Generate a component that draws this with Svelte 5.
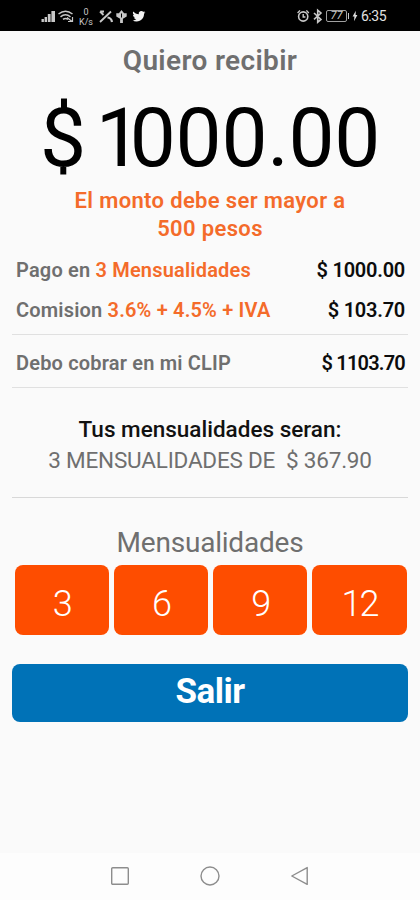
<script lang="ts">
  let amount = $state(1000)
  let months = $state(3)

  const plans = [3, 6, 9, 12]
  const rates: Record<number, number> = { 3: 4.5, 6: 7.5, 9: 9.9, 12: 11.95 }
  const baseRate = 3.6
  const iva = 1.16

  let share = $derived(((baseRate + rates[months]) / 100) * iva)
  let total = $derived(Math.round((amount / (1 - share)) * 10) / 10)
  let fee = $derived(total - amount)
  let monthly = $derived(total / months)

  const money = (n: number) => n.toFixed(2)
</script>

<div class="screen">
  <header class="status">
    <svg class="signal" viewBox="0 0 106 20" width="106" height="20">
      <g fill="#c8c8c8">
        <rect x="-.5" y="12" width="2.4" height="3" />
        <rect x="2.6" y="10" width="2.4" height="5" />
        <rect x="5.8" y="7" width="2.8" height="8" />
        <rect x="9.4" y="4" width="3.6" height="11" />
      </g>
      <g fill="none" stroke="#c8c8c8" stroke-width="1.5">
        <path d="M16.5 7 Q23.5 1.5 30.5 7M18.5 9.8 Q23.5 5.8 28.5 9.8M21 12.4 Q23.5 10.4 26 12.4" />
        <path d="M25 10.5 l5 4 M30.5 10 v4.5 h-4.5" stroke-width="1.2" />
      </g>
      <g fill="none" stroke="#c8c8c8" stroke-width="1.8">
        <path d="M58 4.5 l3.5 3.5 M62 4.5 h-3.8 M69 4.5 L58 15" />
        <path d="M65.5 10.5 q4 .5 4.5 4.5" stroke-width="2.2" />
      </g>
      <path d="M79.5 3 l2.6 3.2 h2.6 v3.4 l-3.8 2.2 v4.2 h-2.8 v-4.2 l-3.8 -2.2 v-3.4 h2.6z" fill="#c8c8c8" />
      <path d="M79 6.5 h1 v4 h-1z" fill="#000" />
      <path
        transform="translate(90.4 2.8) scale(.54)"
        fill="#f2f2f2"
        d="M23.95 4.57a10 10 0 01-2.82.77 4.96 4.96 0 002.16-2.72c-.95.55-2 .95-3.13 1.18a4.92 4.92 0 00-8.38 4.48C7.69 8.1 4.07 6.13 1.64 3.16a4.82 4.82 0 00-.67 2.48c0 1.71.87 3.21 2.19 4.1a4.9 4.9 0 01-2.23-.62v.06a4.92 4.92 0 003.95 4.83 5 5 0 01-2.21.08 4.94 4.94 0 004.6 3.42A9.87 9.87 0 010 19.54a13.99 13.99 0 007.56 2.21c9.05 0 14-7.5 14-13.98 0-.21 0-.42-.02-.63A9.94 9.94 0 0024 4.59z"
      />
    </svg>
    <span class="speed"><span>0</span><span>K/s</span></span>
    <div class="right">
      <svg viewBox="0 0 28 16" width="28" height="16" fill="none" stroke="#c8c8c8">
        <circle cx="6.2" cy="8.5" r="4.6" stroke-width="1.6" />
        <path d="M6.2 6 v3 h2.2 M.6 5 L3 2.4 M9.4 2.4 L11.8 5" stroke-width="1.4" />
        <path d="M17 5 l7 6.4 -3.3 2.8 V2.2 l3.3 2.8 L17 11.4" stroke-width="1.6" />
      </svg>
      <span class="battery">77</span>
      <svg viewBox="0 0 6 12" width="6" height="12">
        <path d="M3.8 .8 L.6 6.6 H2.4 L2 11.2 L5.4 5 H3.6z" fill="#ddd" />
      </svg>
      <span class="clock">6:35</span>
    </div>
  </header>

  <main>
    <h1>Quiero recibir</h1>
    <div class="amount">$ <span class="first">{money(amount)[0]}</span>{money(amount).slice(1)}</div>
    <p class="warning">El monto debe ser mayor a<br />500 pesos</p>

    <div class="row">
      <span class="label">Pago en <b>{months} Mensualidades</b></span>
      <span class="value">$ {money(amount)}</span>
    </div>
    <div class="row">
      <span class="label">Comision <b>{baseRate}% + {rates[months]}% + IVA</b></span>
      <span class="value">$ {money(fee)}</span>
    </div>
    <div class="row total">
      <span class="label">Debo cobrar en mi CLIP</span>
      <span class="value">$ {money(total)}</span>
    </div>

    <section class="summary">
      <p class="lead">Tus mensualidades seran:</p>
      <p class="detail">{months} MENSUALIDADES DE &nbsp;$ {money(monthly)}</p>
    </section>

    <h2>Mensualidades</h2>
    <div class="plans">
      {#each plans as plan}
        <button class="plan" onclick={() => (months = plan)}>{plan}</button>
      {/each}
    </div>
    <button class="exit">Salir</button>
  </main>

  <nav>
    <svg viewBox="0 0 20 20" width="20" height="20"><rect x="1.7" y="1.7" width="16.6" height="16.6" rx="1" /></svg>
    <svg viewBox="0 0 20 20" width="20" height="20"><circle cx="10" cy="10" r="9" /></svg>
    <svg viewBox="0 0 20 20" width="20" height="20"><path d="M17.2 1.6 V18.4 L1.8 10z" /></svg>
  </nav>
</div>

<style>
  :global(body) {
    margin: 0;
    background: #fafafa;
  }

  .screen {
    width: 420px;
    height: 900px;
    display: flex;
    flex-direction: column;
    overflow: hidden;
    background: #fafafa;
    color: #6f6f6f;
    font-family: Roboto, "Liberation Sans", sans-serif;
    white-space: nowrap;
  }

  .status {
    position: relative;
    box-sizing: border-box;
    height: 31px;
    flex: none;
    display: flex;
    justify-content: space-between;
    padding: 7px 34px 0 42px;
    background: #000;
    color: #c8c8c8;
  }

  .signal {
    display: block;
    overflow: visible;
  }

  /* sits in the gap between the wifi and muted-call icons */
  .speed {
    position: absolute;
    left: 78px;
    top: 7px;
    width: 16px;
    display: flex;
    flex-direction: column;
    font-size: 9px;
    line-height: 10px;
    text-align: center;
  }

  .right {
    display: flex;
    align-items: center;
    height: 18px;
  }

  .battery {
    position: relative;
    box-sizing: border-box;
    width: 21px;
    height: 12px;
    margin: 0 5px 0 1px;
    border: 1px solid #a0a0a0;
    border-radius: 2px;
    font-size: 11px;
    font-style: italic;
    line-height: 10px;
    text-align: center;
  }

  .battery::after {
    content: "";
    position: absolute;
    right: -3px;
    top: 2px;
    width: 1.5px;
    height: 6px;
    background: #c8c8c8;
  }

  .clock {
    margin-left: 3px;
    color: #e2e2e2;
    font-size: 14px;
    letter-spacing: -0.5px;
  }

  main {
    flex: 1;
    display: flex;
    flex-direction: column;
    padding: 14px 12px 0;
  }

  h1,
  h2,
  p {
    margin: 0;
    text-align: center;
  }

  h1 {
    font-size: 28px;
    font-weight: 600;
    line-height: 32px;
    letter-spacing: 0.35px;
  }

  .amount {
    margin-top: 21px;
    color: #000;
    font-size: 82px;
    line-height: 80px;
    letter-spacing: -0.3px;
    word-spacing: -10px;
    text-align: center;
  }

  .first {
    letter-spacing: -12px;
  }

  .warning {
    margin-top: 9px;
    color: #f46b2a;
    font-size: 22px;
    font-weight: 600;
    line-height: 28px;
    letter-spacing: 0.35px;
  }

  .row {
    display: flex;
    justify-content: space-between;
    padding: 0 3px 0 4px;
    font-size: 20px;
    font-weight: 600;
    line-height: 40px;
  }

  .warning + .row {
    margin-top: 7px;
  }

  .row b {
    color: #f46b2a;
    font-weight: 600;
  }

  .label {
    letter-spacing: 0.18px;
  }

  .value {
    color: #0c0c0c;
    letter-spacing: -0.25px;
  }

  .total {
    margin-top: 4px;
    padding-top: 8px;
    padding-bottom: 4px;
    border: solid #e0e0e0;
    border-width: 1px 0;
  }

  .total .value {
    letter-spacing: -0.8px;
  }

  .summary {
    padding: 26px 0 21px;
    border-bottom: 1px solid #d8d8d8;
    font-size: 22.5px;
    line-height: 31px;
  }

  .lead {
    color: #111;
    font-weight: 500;
  }

  .detail {
    letter-spacing: -0.2px;
  }

  h2 {
    margin-top: 29px;
    font-size: 28px;
    font-weight: 400;
    line-height: 32px;
    letter-spacing: -0.2px;
  }

  .plans {
    display: grid;
    grid-template-columns: repeat(4, 1fr);
    gap: 5px;
    margin-top: 6px;
    padding: 0 1.5px 0 2.5px;
  }

  button {
    border: 0;
    border-radius: 8px;
    color: #fff;
    font-family: inherit;
  }

  .plan {
    height: 70px;
    padding: 7px 0 0;
    background: #fe4d00;
    font-size: 36px;
    font-weight: 300;
    letter-spacing: -2px;
  }

  .exit {
    height: 58px;
    margin-top: 29px;
    padding: 0 0 4px;
    background: #0072b7;
    font-size: 35px;
    font-weight: 700;
    letter-spacing: -0.5px;
  }

  nav {
    box-sizing: border-box;
    height: 47px;
    flex: none;
    display: flex;
    justify-content: center;
    align-items: center;
    gap: 70px;
    padding-bottom: 1px;
    background: #fdfdfd;
  }

  nav svg {
    fill: none;
    stroke: #8d8d8d;
    stroke-width: 1.4;
    stroke-linejoin: round;
  }
</style>
